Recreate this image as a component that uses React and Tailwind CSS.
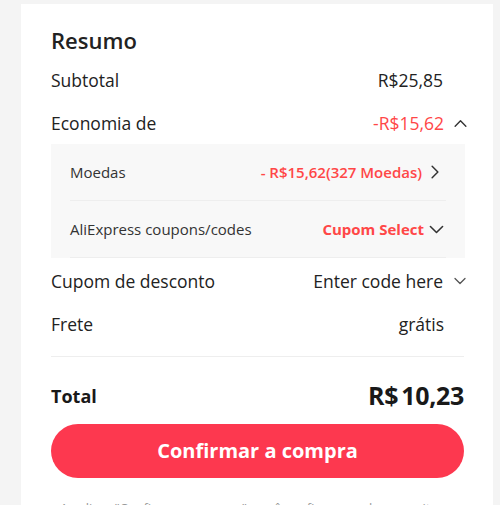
const Chevron = ({ dir = 'down', className = '' }) => {
  const paths = {
    up: 'M2 9.5 L7 4.5 L12 9.5',
    down: 'M2 4.5 L7 9.5 L12 4.5',
    right: 'M4.5 2 L9.5 7 L4.5 12',
  }
  return (
    <svg viewBox="0 0 14 14" className={className} fill="none" stroke="currentColor" strokeWidth="1.3" strokeLinecap="round" strokeLinejoin="round">
      <path d={paths[dir]} />
    </svg>
  )
}

const Row = ({ label, children, className = '' }) => (
  <div className={`flex items-center justify-between h-6 ${className}`}>
    <span className="text-[17.5px] text-[#222]">{label}</span>
    <div className="flex items-center">{children}</div>
  </div>
)

export default function App() {
  return (
    <div className="w-[500px] h-[505px] overflow-hidden bg-[#f4f4f4] pt-[4px] pl-[21px]" style={{ fontFamily: '"Open Sans", sans-serif' }}>
      <div className="w-[472px] h-[600px] bg-white pt-[28px] pl-[30px] pr-[29px]">
        <h2 className="text-[22px] leading-7 font-semibold text-[#222] -mt-[6px] mb-[2px]">Resumo</h2>

        <Row label="Subtotal" className="mt-[14px]">
          <span className="text-[17.5px] text-[#222] mr-[21px]">R$25,85</span>
        </Row>

        <Row label="Economia de" className="mt-[19px]">
          <span className="text-[17.5px] font-medium text-[#ff4747]">-R$15,62</span>
          <Chevron dir="up" className="w-[15px] h-[15px] ml-[9px] -mr-[4px] text-[#333]" />
        </Row>

        <div className="mt-[9px] bg-[#f8f8f8] px-[19px] -mr-px">
          <div className="flex items-center justify-between h-[57px] border-b border-[#eeeeee]">
            <span className="text-[15px] text-[#333]">Moedas</span>
            <div className="flex items-center">
              <span className="text-[15px] font-semibold text-[#ff4747]">- R$15,62(327 Moedas)</span>
              <Chevron dir="right" className="w-[16px] h-[16px] ml-[5px] mr-[3px] text-[#333]" />
            </div>
          </div>
          <div className="flex items-center justify-between h-[57px] border-b border-[#eeeeee]">
            <span className="text-[15px] text-[#333]">AliExpress coupons/codes</span>
            <div className="flex items-center">
              <span className="text-[15px] font-bold text-[#ff4747]">Cupom Select</span>
              <Chevron dir="down" className="w-[17px] h-[17px] ml-[4px] mr-[1px] text-[#333]" />
            </div>
          </div>
        </div>

        <Row label="Cupom de desconto" className="mt-[11px]">
          <span className="text-[17.5px] text-[#222]">Enter code here</span>
          <Chevron dir="down" className="w-[14px] h-[14px] ml-[10px] -mr-[3px] text-[#555]" />
        </Row>

        <Row label="Frete" className="mt-[19px]">
          <span className="text-[17.5px] text-[#222] mr-[20px]">grátis</span>
        </Row>

        <div className="mt-[20px] border-t border-[#eeeeee]" />

        <div className="flex items-center justify-between mt-[24px] h-[30px]">
          <span className="text-[18px] font-bold text-[#191919]">Total</span>
          <span className="text-[25px] font-bold text-[#191919] tracking-[-0.3px]">
            R$<span className="ml-[3px]">10,23</span>
          </span>
        </div>

        <button className="mt-[13px] w-full h-[54px] rounded-full bg-[#fd384f] text-white text-[20px] font-bold">
          Confirmar a compra
        </button>

        <p className="mt-[20px] text-[13px] text-[#999] text-center leading-5">
          Ao clicar "Confirmar a compra", você confirma que leu e aceita os Termos de Uso.
        </p>
      </div>
    </div>
  )
}
